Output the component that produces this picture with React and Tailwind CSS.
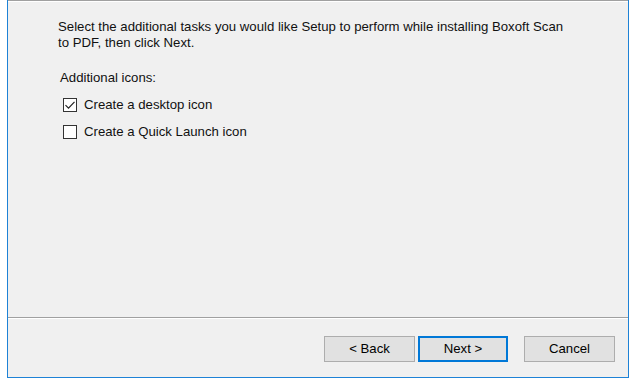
import React from "react";

function Check({ checked }) {
  return (
    <div className="w-[14px] h-[14px] border border-[#333333] bg-white flex items-center justify-center shrink-0">
      {checked && (
        <svg width="12" height="12" viewBox="0 0 12 12">
          <path d="M1.5 6.2 L4.5 9.2 L10.5 2.8" fill="none" stroke="#222" strokeWidth="1.2" />
        </svg>
      )}
    </div>
  );
}

function Btn({ children, primary }) {
  return (
    <div
      className={
        "h-[26px] flex items-center justify-center bg-[#e1e1e1] text-black " +
        (primary ? "w-[90px] border-2 border-[#0078d7]" : "w-[91px] border border-[#adadad]")
      }
    >
      {children}
    </div>
  );
}

export default function App() {
  return (
    <div className="w-[641px] h-[382px] bg-white overflow-hidden" style={{ fontFamily: '"Liberation Sans", Arial, sans-serif' }}>
      <div className="ml-[7px] w-[622px] h-[378px] border-l border-r border-b border-[#1e82d6] bg-[#f0f0f0] flex flex-col text-[13.2px] text-[#111]">
        <div className="h-px bg-[#a0a0a0]" />
        <div className="h-px bg-white" />
        <div className="flex-1 pl-[50px] pt-[17px]">
          <div className="leading-[16px]">
            Select the additional tasks you would like Setup to perform while installing Boxoft Scan
            <br />
            to PDF, then click Next.
          </div>
          <div className="mt-[19px] leading-[16px] pl-[2px]">Additional icons:</div>
          <div className="mt-[11px] flex items-center gap-[7px] pl-[5px] leading-[16px]">
            <Check checked />
            <span>Create a desktop icon</span>
          </div>
          <div className="mt-[11px] flex items-center gap-[7px] pl-[5px] leading-[16px]">
            <Check />
            <span>Create a Quick Launch icon</span>
          </div>
        </div>
        <div className="h-px bg-[#a0a0a0]" />
        <div className="h-px bg-white" />
        <div className="h-[58px] flex items-start pt-[17px] pl-[316px]">
          <Btn>&lt; Back</Btn>
          <div className="w-[3px]" />
          <Btn primary>Next &gt;</Btn>
          <div className="w-[16px]" />
          <Btn>Cancel</Btn>
        </div>
      </div>
    </div>
  );
}
